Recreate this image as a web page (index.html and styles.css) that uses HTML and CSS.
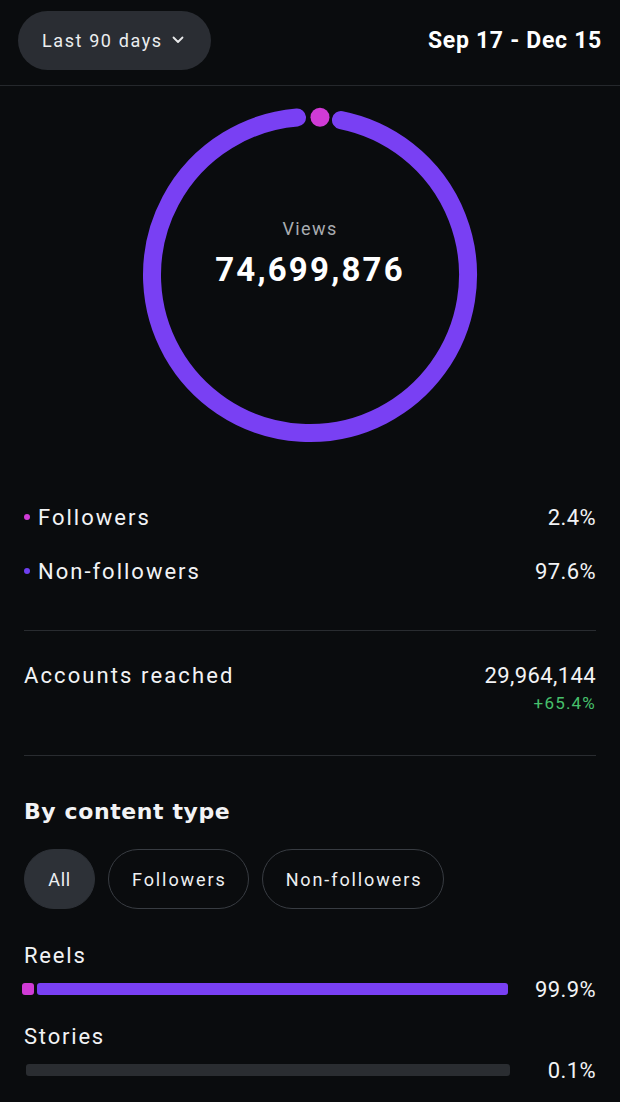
FILE: index.html
```
<!DOCTYPE html>
<html>
<head>
<meta charset="utf-8">
<link rel="stylesheet" href="styles.css">
</head>
<body>
<div class="page">
  <header class="top">
    <div class="range-pill">
      <span>Last 90 days</span>
      <svg class="chev" width="12" height="8" viewBox="0 0 12 8"><path d="M1.5 1.5 L6 6 L10.5 1.5" fill="none" stroke="#e8e9eb" stroke-width="1.8" stroke-linecap="round" stroke-linejoin="round"/></svg>
    </div>
    <div class="dates">Sep 17 - Dec 15</div>
  </header>

  <section class="ring-wrap">
    <div class="ring">
      <svg width="340" height="340" viewBox="0 0 340 340">
        <path d="M200.96 15.06 A158 158 0 1 1 157.06 12.53" fill="none" stroke="#7940f3" stroke-width="18" stroke-linecap="round"/>
        <circle cx="180" cy="12.3" r="9.5" fill="#d03bd6"/>
      </svg>
      <div class="ring-center">
        <div class="ring-label">Views</div>
        <div class="ring-value">74,699,876</div>
      </div>
    </div>
  </section>

  <section class="legend">
    <div class="row">
      <div class="row-name"><span class="dot dot-pink"></span>Followers</div>
      <div class="row-val">2.4%</div>
    </div>
    <div class="row">
      <div class="row-name"><span class="dot dot-purple"></span>Non-followers</div>
      <div class="row-val">97.6%</div>
    </div>
  </section>

  <div class="divider"></div>

  <section class="reach">
    <div class="reach-name">Accounts reached</div>
    <div class="reach-vals">
      <div class="reach-num">29,964,144</div>
      <div class="reach-delta">+65.4%</div>
    </div>
  </section>

  <div class="divider"></div>

  <section class="content-type">
    <h2 class="ct-title">By content type</h2>
    <div class="chips">
      <div class="chip chip-active">All</div>
      <div class="chip">Followers</div>
      <div class="chip">Non-followers</div>
    </div>
    <div class="bar-label">Reels</div>
    <div class="bar-row">
      <div class="bar">
        <div class="seg seg-pink"></div>
        <div class="seg seg-purple"></div>
      </div>
      <div class="bar-val">99.9%</div>
    </div>
    <div class="bar-label">Stories</div>
    <div class="bar-row">
      <div class="bar bar-empty"></div>
      <div class="bar-val">0.1%</div>
    </div>
  </section>
</div>
</body>
</html>
```

FILE: styles.css
```
* { box-sizing: border-box; }
html, body {
  margin: 0;
  padding: 0;
  background: #0a0c0e;
}
body {
  font-family: Roboto, "Liberation Sans", sans-serif;
  color: #f2f3f5;
  width: 620px;
  height: 1102px;
  overflow: hidden;
}
.page { width: 620px; }

.top {
  display: flex;
  justify-content: space-between;
  align-items: center;
  padding: 11px 18px 15px 18px;
  border-bottom: 1px solid #25282c;
}
.range-pill {
  height: 59px;
  width: 193px;
  border-radius: 30px;
  background: #2a2d33;
  display: flex;
  align-items: center;
  gap: 9px;
  padding-left: 24px;
  font-size: 18px;
  letter-spacing: 1.6px;
  color: #eceef0;
}
.chev { margin-top: -2px; }
.dates {
  font-size: 23px;
  font-weight: 700;
  letter-spacing: 0.7px;
  color: #ffffff;
}

.ring-wrap {
  display: flex;
  justify-content: center;
  margin-top: 19px;
}
.ring {
  position: relative;
  width: 340px;
  height: 340px;
}
.ring svg { display: block; }
.ring-center {
  position: absolute;
  left: 0; right: 0;
  top: 110px;
  text-align: center;
}
.ring-label {
  font-size: 18px;
  color: #a9acb1;
  line-height: 28px;
  letter-spacing: 1.4px;
}
.ring-value {
  font-size: 33px;
  font-weight: 700;
  line-height: 42px;
  margin-top: 6px;
  letter-spacing: 2.2px;
  color: #ffffff;
}

.legend {
  margin-top: 45px;
  padding: 0 24px;
}
.row {
  height: 54px;
  display: flex;
  justify-content: space-between;
  align-items: center;
  font-size: 22px;
}
.row-name {
  display: flex;
  align-items: center;
  letter-spacing: 2px;
}
.row-val { letter-spacing: 0.4px; }
.dot {
  width: 6px;
  height: 6px;
  border-radius: 50%;
  margin: 0 8px 0 0;
}
.dot-pink { background: #d03bd6; }
.dot-purple { background: #6e3ff0; }

.divider {
  height: 1px;
  background: #292c30;
  margin: 32px 24px 0 24px;
}

.reach {
  display: flex;
  justify-content: space-between;
  align-items: flex-start;
  padding: 31px 24px 39px 24px;
}
.reach-name {
  font-size: 22px;
  letter-spacing: 2.1px;
  line-height: 28px;
}
.reach-vals { text-align: right; }
.reach-num {
  font-size: 22px;
  letter-spacing: 0.4px;
  line-height: 28px;
}
.reach-delta {
  font-size: 17px;
  line-height: 26px;
  color: #47c06c;
  letter-spacing: 1.2px;
}
.reach + .divider { margin-top: 0; }

.content-type {
  padding: 42px 24px 0 24px;
}
.ct-title {
  margin: 0;
  font-family: "DejaVu Sans", Roboto, sans-serif;
  font-size: 22px;
  font-weight: 700;
  line-height: 28px;
  letter-spacing: 0.6px;
}
.chips {
  display: flex;
  gap: 13px;
  margin-top: 23px;
}
.chip {
  height: 60px;
  border-radius: 30px;
  border: 1.5px solid #383c42;
  padding: 0 21px 0 23px;
  display: flex;
  align-items: center;
  font-size: 18px;
  letter-spacing: 1.9px;
  color: #eef0f2;
}
.chip-active {
  background: #2d3137;
  border-color: #2d3137;
  width: 71px;
  justify-content: center;
  padding: 0;
  letter-spacing: 0.6px;
}
.bar-label {
  margin-top: 33px;
  font-size: 22px;
  line-height: 28px;
  letter-spacing: 1.8px;
}
.bar-row + .bar-label { margin-top: 15px; }
.bar-row {
  height: 38px;
  display: flex;
  align-items: center;
  justify-content: space-between;
}
.bar {
  width: 484px;
  height: 12px;
  display: flex;
  gap: 3px;
}
.seg { height: 100%; border-radius: 3px; }
.seg-pink { width: 12px; background: #d03bd6; margin-left: -2px; }
.seg-purple { flex: 1; background: #7940f3; }
.bar-empty {
  background: #2a2d31;
  border-radius: 3px;
  margin-left: 2px;
}
.bar-val {
  font-size: 22px;
  letter-spacing: 0.4px;
}
```
